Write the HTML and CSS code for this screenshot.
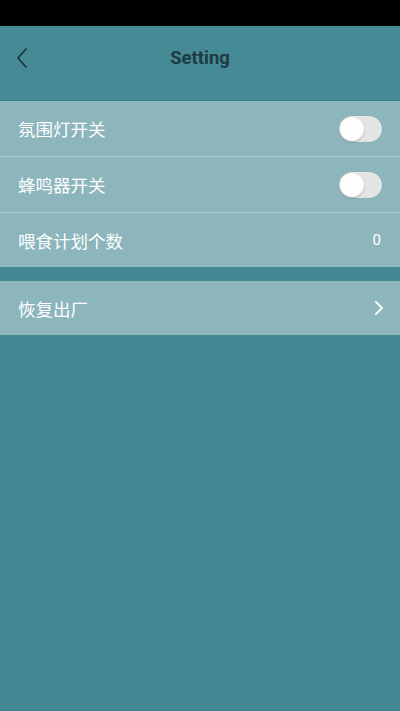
FILE: index.html
```html
<!DOCTYPE html>
<html>
<head>
<meta charset="utf-8">
<link rel="stylesheet" href="styles.css">
</head>
<body>
<div class="status"></div>
<header class="topbar">
  <span class="back">
    <svg width="14" height="22" viewBox="0 0 14 22"><path d="M11 2 L3 11 L11 20" fill="none" stroke="#1d3640" stroke-width="1.8" stroke-linecap="round" stroke-linejoin="round"/></svg>
  </span>
  <h1 class="title">Setting</h1>
</header>
<section class="group">
  <div class="row">
    <span class="label">氛围灯开关</span>
    <span class="switch"><span class="knob"></span></span>
  </div>
  <div class="row">
    <span class="label">蜂鸣器开关</span>
    <span class="switch"><span class="knob"></span></span>
  </div>
  <div class="row last">
    <span class="label">喂食计划个数</span>
    <span class="value">0</span>
  </div>
</section>
<section class="group second">
  <div class="row last">
    <span class="label">恢复出厂</span>
    <svg class="arrow" width="10" height="16" viewBox="0 0 10 16"><path d="M2 2 L8 8 L2 14" fill="none" stroke="#ffffff" stroke-width="1.8" stroke-linecap="round" stroke-linejoin="round"/></svg>
  </div>
</section>
</body>
</html>
```
FILE: styles.css
```css
html, body {
  margin: 0;
  padding: 0;
  height: 100%;
}
body {
  background: #448894;
  font-family: Roboto, "Noto Sans CJK SC", sans-serif;
  width: 400px;
  height: 711px;
  overflow: hidden;
}
.status {
  height: 26px;
  background: #000;
}
.topbar {
  height: 75px;
  background: #468a96;
  border-bottom: 1px solid #3f7f8b;
  display: flex;
  align-items: center;
  justify-content: center;
  position: relative;
  box-sizing: border-box;
}
.back {
  position: absolute;
  left: 15px;
  top: 21px;
  display: flex;
}
.title {
  margin: 0 0 10px 0;
  font-size: 18.5px;
  font-weight: bold;
  color: #1e3a45;
  font-family: Roboto, "Noto Sans", sans-serif;
}
.group {
  background: #8cb5bc;
}
.group.second {
  margin-top: 14px;
}
.row {
  display: flex;
  align-items: center;
  justify-content: space-between;
  padding: 0 18px;
  border-bottom: 1px solid #b3cfd3;
  box-sizing: border-box;
  height: 56px;
}
.row.last {
  border-bottom: none;
  height: 54px;
}
.label {
  color: #ffffff;
  font-size: 17.5px;
  font-family: "Noto Sans CJK SC", sans-serif;
}
.value {
  color: #ffffff;
  font-size: 15px;
  font-family: Roboto, sans-serif;
  margin-right: 1px;
}
.switch {
  width: 43px;
  height: 26px;
  border-radius: 13px;
  background: #e3e5e5;
  position: relative;
  box-shadow: 0 0 1px rgba(0,0,0,0.15);
}
.knob {
  position: absolute;
  left: 1px;
  top: 1px;
  width: 24px;
  height: 24px;
  border-radius: 50%;
  background: #fdfdfd;
  box-shadow: 0 1px 2px rgba(0,0,0,0.25);
}
.arrow {
  margin-right: -2px;
}
```
